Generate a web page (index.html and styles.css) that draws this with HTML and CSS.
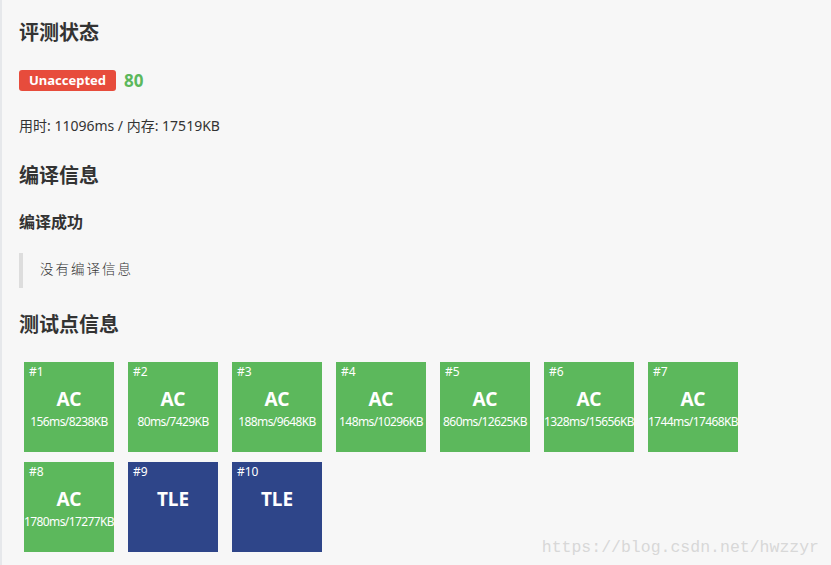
FILE: index.html
```html
<!DOCTYPE html>
<html lang="zh-CN">
<head>
<meta charset="UTF-8" />
<title>评测状态</title>
<link rel="stylesheet" href="styles.css">
</head>
<body>
<div class="page">
  <h2 class="title first">评测状态</h2>
  <div class="status">
    <span class="badge">Unaccepted</span>
    <span class="score">80</span>
  </div>
  <p class="usage">用时: 11096ms / 内存: 17519KB</p>

  <h2 class="title">编译信息</h2>
  <h3 class="subtitle">编译成功</h3>
  <blockquote class="compile">没有编译信息</blockquote>

  <h2 class="title">测试点信息</h2>
  <div class="cases">
    <div class="case ac"><span class="num">#1</span><b>AC</b><span class="detail">156ms/8238KB</span></div>
    <div class="case ac"><span class="num">#2</span><b>AC</b><span class="detail">80ms/7429KB</span></div>
    <div class="case ac"><span class="num">#3</span><b>AC</b><span class="detail">188ms/9648KB</span></div>
    <div class="case ac"><span class="num">#4</span><b>AC</b><span class="detail">148ms/10296KB</span></div>
    <div class="case ac"><span class="num">#5</span><b>AC</b><span class="detail">860ms/12625KB</span></div>
    <div class="case ac"><span class="num">#6</span><b>AC</b><span class="detail">1328ms/15656KB</span></div>
    <div class="case ac"><span class="num">#7</span><b>AC</b><span class="detail">1744ms/17468KB</span></div>
    <div class="case ac"><span class="num">#8</span><b>AC</b><span class="detail">1780ms/17277KB</span></div>
    <div class="case tle"><span class="num">#9</span><b>TLE</b></div>
    <div class="case tle"><span class="num">#10</span><b>TLE</b></div>
  </div>
</div>
<div class="watermark">https://blog.csdn.net/hwzzyr</div>
</body>
</html>
```
FILE: styles.css
```css
html, body {
  margin: 0;
  height: 100%;
}
body {
  background: #f7f7f7;
  color: #333;
  font-family: "Noto Sans", "Noto Sans CJK SC", sans-serif;
  border-left: 2px solid #e6e8eb;
  box-sizing: border-box;
  overflow: hidden;
}
.page {
  padding: 0 0 0 17px;
}
.title {
  font-size: 20px;
  line-height: 28px;
  font-weight: bold;
  margin: 0;
  padding-top: 26px;
}
.title.first {
  padding-top: 19px;
}
.status {
  display: flex;
  align-items: center;
  gap: 8px;
  height: 21px;
  margin-top: 23px;
}
.badge {
  background: #e74c3c;
  color: #fff;
  font-size: 13px;
  font-weight: bold;
  line-height: 21px;
  padding: 0 10px;
  border-radius: 3px;
}
.score {
  color: #5cb85c;
  font-size: 17px;
  font-weight: bold;
}
.usage {
  font-size: 14px;
  line-height: 20px;
  margin: 25px 0 0;
}
.subtitle {
  font-size: 16px;
  line-height: 22px;
  font-weight: bold;
  margin: 21px 0 0;
}
.compile {
  margin: 20px 0 0;
  border-left: 4px solid #ddd;
  padding: 0 0 0 17px;
  height: 35px;
  line-height: 35px;
  font-family: "Liberation Mono", "Noto Sans CJK SC", monospace;
  font-size: 13.5px;
  letter-spacing: 2px;
  font-weight: 300;
}
.compile + .title {
  padding-top: 23px;
}
.cases {
  display: grid;
  grid-template-columns: repeat(7, 90px);
  column-gap: 14px;
  row-gap: 10px;
  margin: 23px 0 0 5px;
}
.case {
  height: 90px;
  color: #fff;
  display: flex;
  flex-direction: column;
  align-items: center;
}
.case.ac {
  background: #5cb85c;
}
.case.tle {
  background: #2e4589;
}
.num {
  align-self: flex-start;
  font-size: 12px;
  line-height: 14px;
  margin: 3px 0 0 5px;
}
.case b {
  font-size: 19px;
  line-height: 24px;
  margin-top: 8px;
}
.detail {
  font-size: 12px;
  line-height: 16px;
  margin-top: 3px;
  letter-spacing: -0.6px;
  white-space: nowrap;
}
.watermark {
  position: absolute;
  right: 12px;
  bottom: 8px;
  font-family: "Liberation Mono", monospace;
  font-size: 16.5px;
  color: #d8d8d8;
}
```
